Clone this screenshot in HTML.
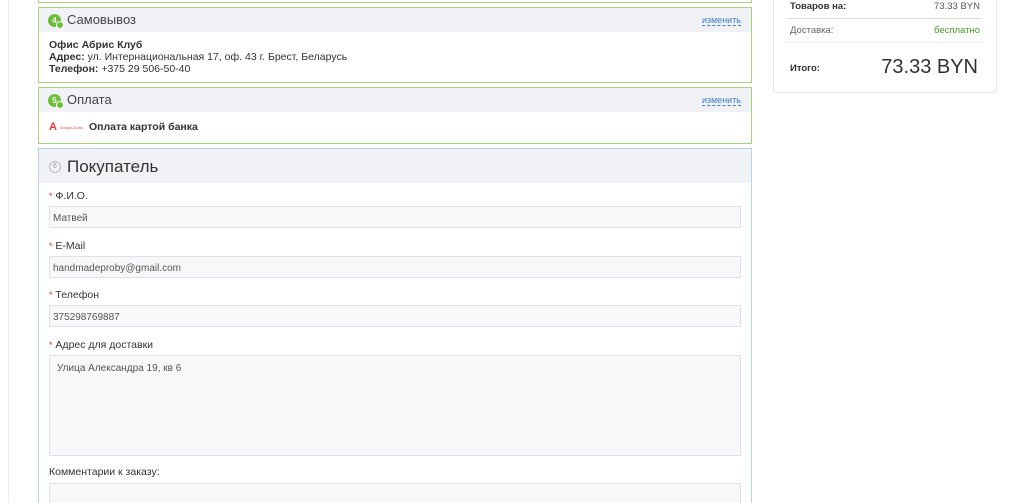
<!DOCTYPE html>
<html style="overflow:hidden;height:503px"><head><meta charset="utf-8"><style>
*{box-sizing:border-box;margin:0;padding:0}
body{width:1024px;height:503px;overflow:hidden;background:#fff;font-family:"Liberation Sans",sans-serif;color:#333;position:relative}
.a{position:absolute}
.box{position:absolute;left:38px;width:714px;border:1px solid #a6d67a;background:#fff;overflow:hidden}
.hd{background:#f0f2f5;height:24px;position:relative}
.ic{position:absolute;left:9px;top:6px;width:13px;height:13px;border-radius:50%;background:#6cbf3c;color:#fff;font-size:8px;text-align:center;line-height:13px;font-weight:bold}
.ic:after{content:"";position:absolute;right:-3px;bottom:-2px;width:6px;height:6px;border-radius:50%;background:#6cbf3c;border:1px solid #fff}
.tt{position:absolute;left:28px;top:4px;font-size:13px;color:#444}
.ch{position:absolute;right:10px;top:7px;font-size:9px;color:#3f7fc4;border-bottom:1px dashed #3f7fc4;line-height:10px}
.t{font-size:10.5px;color:#333;line-height:12px}
.lb{position:absolute;left:49px;font-size:10.5px;color:#333}
.lb i{color:#d33;font-style:normal;font-size:9px}
.in{position:absolute;left:49px;width:692px;height:22px;border:1px solid #dfe2e4;background:#f7f8f9;font-size:10px;color:#555;padding:6px 0 0 3px}
.rr{position:absolute;left:790px;width:190px;font-size:9.5px;color:#333}
</style></head><body>
<div class="a" style="left:8px;top:0;width:1px;height:503px;background:#eee"></div>
<div class="box" style="top:-10px;height:13px"></div>

<div class="box" style="top:7px;height:76px">
 <div class="hd"><div class="ic">4</div><div class="tt">Самовывоз</div><div class="ch">изменить</div></div>
 <div class="t" style="padding:7px 0 0 10px"><b>Офис Абрис Клуб</b><br><b>Адрес:</b> ул. Интернациональная 17, оф. 43 г. Брест, Беларусь<br><b>Телефон:</b> +375 29 506-50-40</div>
</div>

<div class="box" style="top:87px;height:57px">
 <div class="hd"><div class="ic">5</div><div class="tt">Оплата</div><div class="ch">изменить</div></div>
 <div class="a" style="left:10px;top:33px;color:#e33;font-weight:bold;font-size:11px">А</div>
 <div class="a" style="left:21px;top:37px;color:#e55;font-size:4px">Альфа-Банк</div>
 <div class="a" style="left:50px;top:33px;font-size:10.5px;font-weight:bold">Оплата картой банка</div>
</div>

<div class="box" style="top:148px;height:370px;border-color:#b7d3e6">
 <div class="hd" style="height:34px"><div class="a" style="left:10px;top:12px;width:12px;height:12px;border:1px solid #bbb;border-radius:50%;font-size:7px;color:#999;text-align:center;line-height:10px">6</div><div class="a" style="left:28px;top:8px;font-size:17px;color:#333">Покупатель</div></div>
</div>
<div class="lb" style="top:190px"><i>*</i> Ф.И.О.</div>
<div class="in" style="top:206px">Матвей</div>
<div class="lb" style="top:240px"><i>*</i> E-Mail</div>
<div class="in" style="top:256px">handmadeproby@gmail.com</div>
<div class="lb" style="top:289px"><i>*</i> Телефон</div>
<div class="in" style="top:305px">375298769887</div>
<div class="lb" style="top:339px"><i>*</i> Адрес для доставки</div>
<div class="in" style="top:355px;height:101px;padding:7px 0 0 7px">Улица Александра 19, кв 6</div>
<div class="lb" style="top:466px">Комментарии к заказу:</div>
<div class="in" style="top:483px;height:20px;border-bottom:none"></div>

<div class="a" style="left:773px;top:-5px;width:224px;height:98px;border:1px solid #e8e8e8;border-radius:3px"></div>
<div class="rr" style="top:1px"><b style="font-weight:bold">Товаров на:</b><span style="float:right;color:#555">73.33 BYN</span></div>
<div class="a" style="left:786px;top:18px;width:196px;height:1px;background:#ddd"></div>
<div class="rr" style="top:25px;color:#666">Доставка:<span style="float:right;color:#4a9a2a">бесплатно</span></div>
<div class="a" style="left:786px;top:42px;width:196px;height:1px;background:#eee"></div>
<div class="rr" style="top:63px;font-weight:bold">Итого:</div>
<div class="a" style="left:850px;top:56px;width:128px;text-align:right;font-size:20px;color:#333">73.33 BYN</div>
</body></html>
